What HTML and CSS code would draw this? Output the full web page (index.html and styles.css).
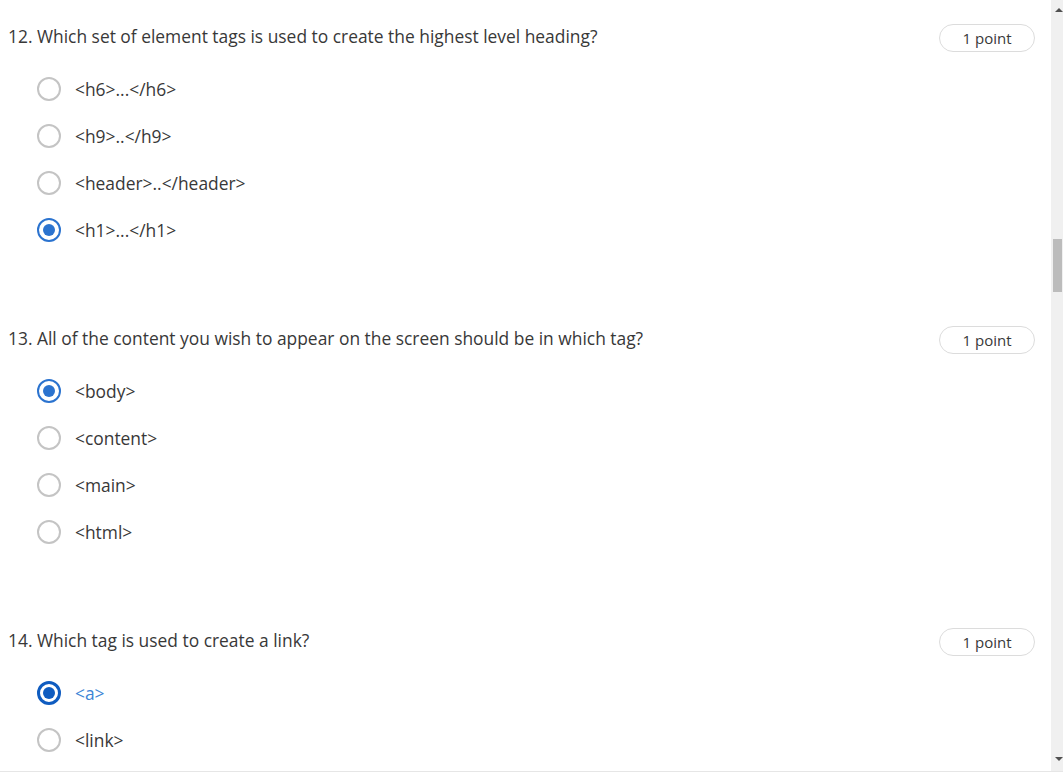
FILE: index.html
```html
<!DOCTYPE html>
<html lang="en">
<head>
<meta charset="utf-8">
<title>Quiz</title>
<link rel="stylesheet" href="styles.css">
</head>
<body>
<div class="frame">
  <main class="content">
    <section class="question">
      <div class="q-head">
        <span class="q-title">12.&nbsp;Which set of element tags is used to create the highest level heading?</span>
        <span class="points">1 point</span>
      </div>
      <ul class="options">
        <li class="option"><span class="radio"></span><span class="label">&lt;h6&gt;...&lt;/h6&gt;</span></li>
        <li class="option"><span class="radio"></span><span class="label">&lt;h9&gt;..&lt;/h9&gt;</span></li>
        <li class="option"><span class="radio"></span><span class="label">&lt;header&gt;..&lt;/header&gt;</span></li>
        <li class="option"><span class="radio checked"></span><span class="label">&lt;h1&gt;...&lt;/h1&gt;</span></li>
      </ul>
    </section>
    <section class="question">
      <div class="q-head">
        <span class="q-title">13.&nbsp;All of the content you wish to appear on the screen should be in which tag?</span>
        <span class="points">1 point</span>
      </div>
      <ul class="options">
        <li class="option"><span class="radio checked"></span><span class="label">&lt;body&gt;</span></li>
        <li class="option"><span class="radio"></span><span class="label">&lt;content&gt;</span></li>
        <li class="option"><span class="radio"></span><span class="label">&lt;main&gt;</span></li>
        <li class="option"><span class="radio"></span><span class="label">&lt;html&gt;</span></li>
      </ul>
    </section>
    <section class="question">
      <div class="q-head">
        <span class="q-title">14.&nbsp;Which tag is used to create a link?</span>
        <span class="points">1 point</span>
      </div>
      <ul class="options">
        <li class="option focused"><span class="radio checked"></span><span class="label">&lt;a&gt;</span></li>
        <li class="option"><span class="radio"></span><span class="label">&lt;link&gt;</span></li>
      </ul>
    </section>
  </main>
  <div class="scrollbar">
    <span class="arrow up"></span>
    <div class="track"><span class="thumb"></span></div>
    <span class="arrow down"></span>
  </div>
</div>
</body>
</html>
```
FILE: styles.css
```css
html, body {
  margin: 0;
  padding: 0;
  background: #ffffff;
}

body {
  font-family: "Open Sans", "Noto Sans", sans-serif;
  color: #383838;
  width: 1063px;
  height: 772px;
  overflow: hidden;
}

.frame {
  display: flex;
  height: 771px;
  border-bottom: 1px solid #e6e6e6;
  overflow: hidden;
}

.content {
  flex: 1;
  padding: 24px 16px 0 8px;
  overflow: hidden;
}

.question {
  margin-bottom: 84px;
}

.q-head {
  display: flex;
  align-items: center;
  justify-content: space-between;
  height: 28px;
}

.q-title {
  font-size: 17.4px;
  line-height: 24px;
  margin-top: -5px;
  white-space: nowrap;
}

.points {
  box-sizing: border-box;
  width: 96px;
  height: 28px;
  border: 1px solid #dcdcdc;
  border-radius: 14px;
  font-size: 15px;
  line-height: 26px;
  text-align: center;
  color: #383838;
}

.options {
  list-style: none;
  margin: 25px 0 0 0;
  padding: 0 0 0 29px;
  display: flex;
  flex-direction: column;
  gap: 23px;
}

.option {
  display: flex;
  align-items: center;
  height: 24px;
  gap: 14px;
}

.radio {
  box-sizing: border-box;
  width: 24px;
  height: 24px;
  border: 2px solid #c4c4c4;
  border-radius: 50%;
  display: flex;
  align-items: center;
  justify-content: center;
  flex: none;
}

.radio.checked {
  border-color: #2b73cf;
}

.radio.checked::after {
  content: "";
  width: 12px;
  height: 12px;
  border-radius: 50%;
  background: #2b73cf;
}

.label {
  font-size: 17.4px;
  line-height: 24px;
  white-space: nowrap;
}

.option.focused .radio {
  border: 3px solid #0f5cc0;
}

.option.focused .radio::after {
  background: #0f5cc0;
}

.option.focused .label {
  color: #3d86d6;
}

.scrollbar {
  width: 12px;
  flex: none;
  background: #f0f0f0;
  display: flex;
  flex-direction: column;
  align-items: center;
}

.track {
  flex: 1;
  width: 100%;
  padding-top: 221px;
  box-sizing: border-box;
}

.thumb {
  display: block;
  width: 9px;
  height: 53px;
  margin-left: 2px;
  background: #bcbcbc;
}

.arrow {
  width: 0;
  height: 0;
  border-left: 4px solid transparent;
  border-right: 4px solid transparent;
  flex: none;
}

.arrow.up {
  margin-top: 8px;
  margin-left: 3px;
  border-bottom: 4px solid #505050;
  margin-bottom: 6px;
}

.arrow.down {
  margin-bottom: 10px;
  margin-left: 3px;
  border-top: 4px solid #505050;
}
```
